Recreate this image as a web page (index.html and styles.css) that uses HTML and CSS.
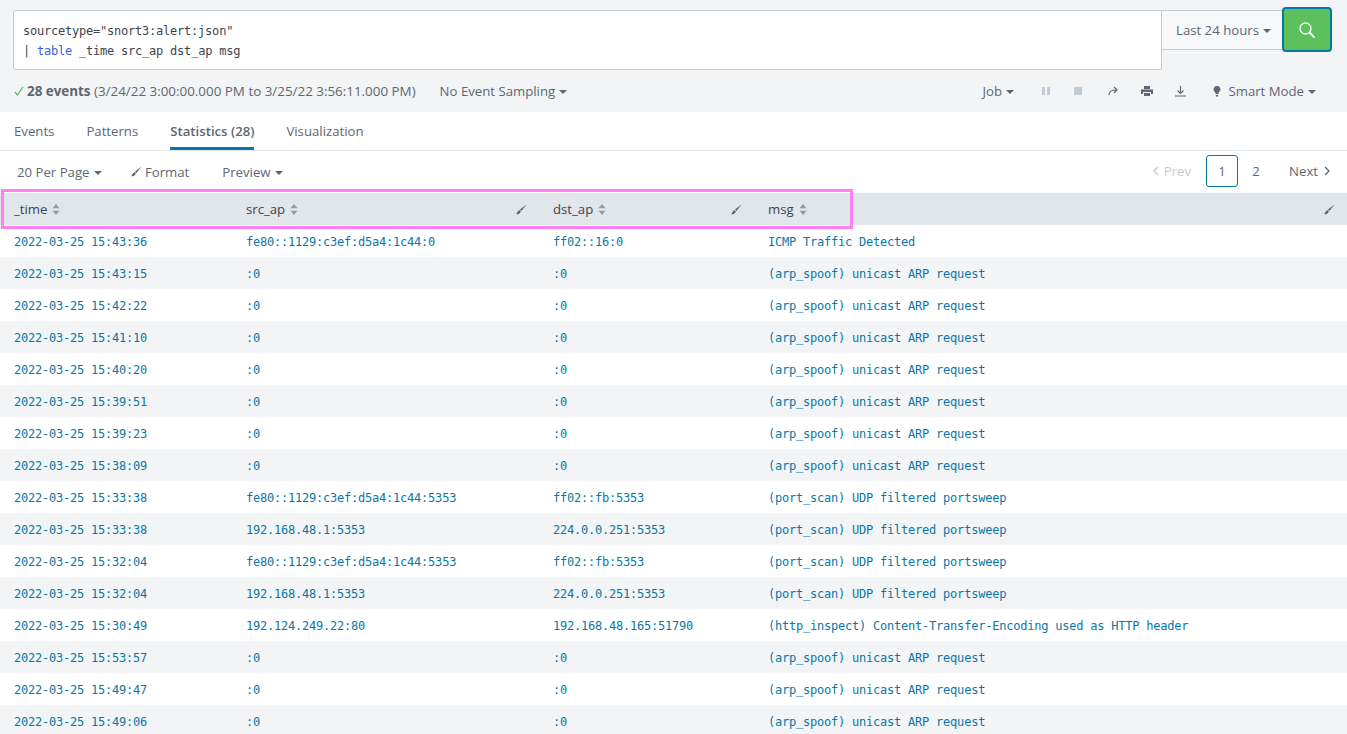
FILE: index.html
```html
<!DOCTYPE html>
<html lang="en">
    <head>
        <meta charset="utf-8">
        <title>Search</title>
        <link rel="stylesheet" href="styles.css">
    </head>
    <body>
        <div class="searchBar">
            <div class="queryBox">
                <div>sourcetype="snort3:alert:json"</div>
                <div>| <span class="keyword">table</span> _time src_ap dst_ap msg</div>
            </div>
            <div class="timePicker">Last 24 hours<span class="caret"></span></div>
            <div class="searchBtn">
                <svg width="16" height="16" viewBox="0 0 16 16" fill="none" stroke="#fff" stroke-width="1.3"><circle cx="6.500" cy="6.500" r="5.500"/><path d="M10.500 10.500l5 5" stroke-width="1.800"/></svg>
            </div>
        </div>

        <div class="statusRow">
            <svg class="check" width="10" height="10" viewBox="0 0 10 10" fill="none" stroke="#5cb85c" stroke-width="1.2"><path d="M1 6l2.500 3L9 1"/></svg>
            <span class="summary"><b>28 events</b> (3/24/22 3:00:00.000 PM to 3/25/22 3:56:11.000 PM)</span>
            <span class="sampling">No Event Sampling<span class="caret"></span></span>
            <div class="jobTools">
                <span class="job">Job<span class="caret"></span></span>
                <svg class="tool" width="10" height="10" viewBox="0 0 10 10" fill="#c3cbd4"><rect x="1" y="1" width="3" height="8"/><rect x="6" y="1" width="3" height="8"/></svg>
                <svg class="tool stop" width="10" height="10" viewBox="0 0 10 10" fill="#c3cbd4"><rect x="1" y="1" width="8" height="8"/></svg>
                <svg class="tool" width="11" height="10" viewBox="0 0 11 10" fill="none" stroke="#5c6773" stroke-width="1.2"><path d="M1 9c0-3 2-5 7-5M6 1l3 3-3 3"/></svg>
                <svg class="tool" width="12" height="11" viewBox="0 0 12 11" fill="#5c6773"><rect x="3" y="0" width="6" height="3"/><path d="M0 3.500h12V8h-2V6H2v2H0z"/><rect x="3" y="7" width="6" height="3"/></svg>
                <svg class="tool" width="11" height="11" viewBox="0 0 11 11" fill="none" stroke="#5c6773" stroke-width="1.1"><path d="M5.500 0v7M2.500 4.500l3 3 3-3M0 10h11"/></svg>
                <span class="mode">
                    <svg width="8" height="11" viewBox="0 0 8 11" fill="#5c6773"><path d="M4 0a3.300 3.300 0 0 1 2 6l-.6 2H2.600L2 6a3.300 3.300 0 0 1 2-6z"/><rect x="2.800" y="9" width="2.400" height="1.500"/></svg>
                    Smart Mode<span class="caret"></span>
                </span>
            </div>
        </div>

        <div class="results">
            <div class="tabs">
                <a>Events</a>
                <a>Patterns</a>
                <a class="active">Statistics (28)</a>
                <a>Visualization</a>
            </div>
            <div class="controls">
                <span class="perPage">20 Per Page<span class="caret"></span></span>
                <span class="format">
                    <svg class="brush" width="11" height="11" viewBox="0 0 11 11"><path d="M10.500 0.500L4 5.500 5.500 7z M3.500 6L1 8.500 0.500 10.500 3 10 5 7.500z"/></svg>
                    Format
                </span>
                <span class="preview">Preview<span class="caret"></span></span>
                <div class="pager">
                    <span class="prev"><svg width="7" height="10" viewBox="0 0 7 10" fill="none" stroke="#c3cbd4" stroke-width="1.3"><path d="M6 1L2 5l4 4"/></svg>Prev</span>
                    <span class="page current">1</span>
                    <span class="page">2</span>
                    <span class="next">Next<svg width="7" height="10" viewBox="0 0 7 10" fill="none" stroke="#5c6773" stroke-width="1.3"><path d="M1 1l4 4-4 4"/></svg></span>
                </div>
            </div>
            <div class="tableWrap">
                <table>
                    <thead id="head"></thead>
                    <tbody id="rows"></tbody>
                </table>
                <div class="highlight"></div>
            </div>
        </div>
<script>
    //icons used in the header cells
    const sortIcon='<svg class="sort" width="8" height="11" viewBox="0 0 8 11" fill="#939ca6"><path d="M4 0l3.500 4.200h-7zM4 11L.5 6.800h7z"/></svg>';
    const brushIcon='<svg class="brush edge" width="11" height="11" viewBox="0 0 11 11"><path d="M10.500 0.500L4 5.500 5.500 7z M3.500 6L1 8.500 0.500 10.500 3 10 5 7.500z"/></svg>';

    const spoof='(arp_spoof) unicast ARP request';
    const scan='(port_scan) UDP filtered portsweep';
    const data=[
        ['15:43:36','fe80::1129:c3ef:d5a4:1c44:0','ff02::16:0','ICMP Traffic Detected'],
        ['15:43:15',':0',':0',spoof],
        ['15:42:22',':0',':0',spoof],
        ['15:41:10',':0',':0',spoof],
        ['15:40:20',':0',':0',spoof],
        ['15:39:51',':0',':0',spoof],
        ['15:39:23',':0',':0',spoof],
        ['15:38:09',':0',':0',spoof],
        ['15:33:38','fe80::1129:c3ef:d5a4:1c44:5353','ff02::fb:5353',scan],
        ['15:33:38','192.168.48.1:5353','224.0.0.251:5353',scan],
        ['15:32:04','fe80::1129:c3ef:d5a4:1c44:5353','ff02::fb:5353',scan],
        ['15:32:04','192.168.48.1:5353','224.0.0.251:5353',scan],
        ['15:30:49','192.124.249.22:80','192.168.48.165:51790','(http_inspect) Content-Transfer-Encoding used as HTTP header'],
        ['15:53:57',':0',':0',spoof],
        ['15:49:47',':0',':0',spoof],
        ['15:49:06',':0',':0',spoof]
    ];

    let head='<tr>';
    ['_time','src_ap','dst_ap','msg'].forEach((name,i)=>{
        head+=`<th>${name}${sortIcon}${i>0?brushIcon:''}</th>`;
    });
    document.getElementById('head').innerHTML=head+'</tr>';

    let body='';
    data.forEach(row=>{
        body+=`<tr><td>2022-03-25 ${row[0]}</td><td>${row[1]}</td><td>${row[2]}</td><td>${row[3]}</td></tr>`;
    });
    document.getElementById('rows').innerHTML=body;
</script>
    </body>
</html>
```

FILE: styles.css
```css
html, body{
    height: 734px;
    overflow: hidden;
}

body{
    margin: 0;
    background-color: #f2f4f5;
    font-family: "Open Sans", sans-serif;
    font-size: 13.2px;
    color: #5c6773;
}

.caret{
    display: inline-block;
    width: 0;
    height: 0;
    margin-left: 4px;
    vertical-align: 2px;
    border-left: 4px solid transparent;
    border-right: 4px solid transparent;
    border-top: 4px solid currentColor;
}

.searchBar{
    display: flex;
    align-items: flex-start;
    padding: 7px 15px 0 13px;
    height: 63px;
}

.queryBox{
    flex: 1;
    height: 60px;
    margin-top: 3px;
    box-sizing: border-box;
    padding: 10px 9px;
    background: #fff;
    border: 1px solid #c3cbd4;
    border-radius: 3px 0 0 3px;
    font-family: "DejaVu Sans Mono", monospace;
    font-size: 12px;
    letter-spacing: -0.22px;
    line-height: 20px;
    color: #3c444d;
}

.keyword{
    color: #3863e0;
}

.timePicker{
    width: 120px;
    height: 40px;
    margin-top: 3px;
    box-sizing: border-box;
    padding-left: 14px;
    line-height: 38px;
    background: #f7f8fa;
    border: 1px solid #c3cbd4;
    border-left: 0;
    border-right: 0;
    white-space: nowrap;
}

.searchBtn{
    display: flex;
    align-items: center;
    justify-content: center;
    width: 50px;
    height: 45px;
    box-sizing: border-box;
    background: #5cc05c;
    border: 2px solid #0877a6;
    border-radius: 4px;
}

.statusRow{
    display: flex;
    align-items: center;
    height: 42px;
    padding-left: 14px;
    white-space: nowrap;
}

.check{
    margin-right: 3px;
}

.summary{
    font-size: 13.4px;
}

.sampling{
    margin-left: 24px;
}

.jobTools{
    display: flex;
    align-items: center;
    margin-left: auto;
    padding-right: 31px;
}

.job{
    margin-right: 27px;
}

.tool{
    margin-right: 22px;
}

.tool.stop{
    margin-right: 25px;
}

.mode{
    margin-left: 5px;
}

.mode svg{
    margin-right: 4px;
    vertical-align: -1px;
}

.results{
    background: #fff;
}

.tabs{
    display: flex;
    gap: 32px;
    height: 38px;
    padding-left: 14px;
    border-bottom: 1px solid #e1e6eb;
}

.tabs a{
    padding-top: 10px;
    height: 28px;
}

.tabs a.active{
    font-weight: 600;
    height: 25px;
    border-bottom: 3px solid #0877a6;
}

.controls{
    display: flex;
    align-items: center;
    height: 42px;
    padding-left: 17px;
}

.format{
    margin-left: 29px;
}

.preview{
    margin-left: 33px;
}

.brush{
    fill: #5c6773;
}

.pager{
    display: flex;
    align-items: center;
    margin-left: auto;
    margin-top: -2px;
    padding-right: 16px;
}

.prev{
    color: #c3cbd4;
    margin-right: 15px;
}

.prev svg{
    margin-right: 5px;
}

.next svg{
    margin-left: 6px;
}

.page{
    width: 32px;
    height: 32px;
    box-sizing: border-box;
    line-height: 30px;
    text-align: center;
    border: 1px solid transparent;
    border-radius: 3px;
}

.page + .page{
    margin-left: 2px;
}

.page.current{
    border-color: #0877a6;
}

.next{
    margin-left: 17px;
}

.tableWrap{
    position: relative;
}

table{
    width: 100%;
    table-layout: fixed;
    border-collapse: collapse;
}

th, td{
    box-sizing: border-box;
}

th:nth-child(1){ width: 232px; }
th:nth-child(2){ width: 307px; }
th:nth-child(3){ width: 215px; }

th{
    position: relative;
    height: 32px;
    padding: 0 0 0 14px;
    text-align: left;
    font-weight: 400;
    background: #e1e6eb;
    color: #3c444d;
}

.sort{
    margin-left: 5px;
    vertical-align: -1px;
}

.edge{
    position: absolute;
    right: 12px;
    top: 11px;
}

td{
    height: 32px;
    padding: 1px 0 0 14px;
    font-family: "DejaVu Sans Mono", monospace;
    font-size: 12px;
    letter-spacing: -0.22px;
    color: #0877a6;
    white-space: nowrap;
}

tbody tr:nth-child(even){
    background: #f2f4f5;
}

.highlight{
    position: absolute;
    left: 1px;
    top: -4px;
    width: 852px;
    height: 40px;
    box-sizing: border-box;
    border: 3px solid #ff80f5;
}
```
